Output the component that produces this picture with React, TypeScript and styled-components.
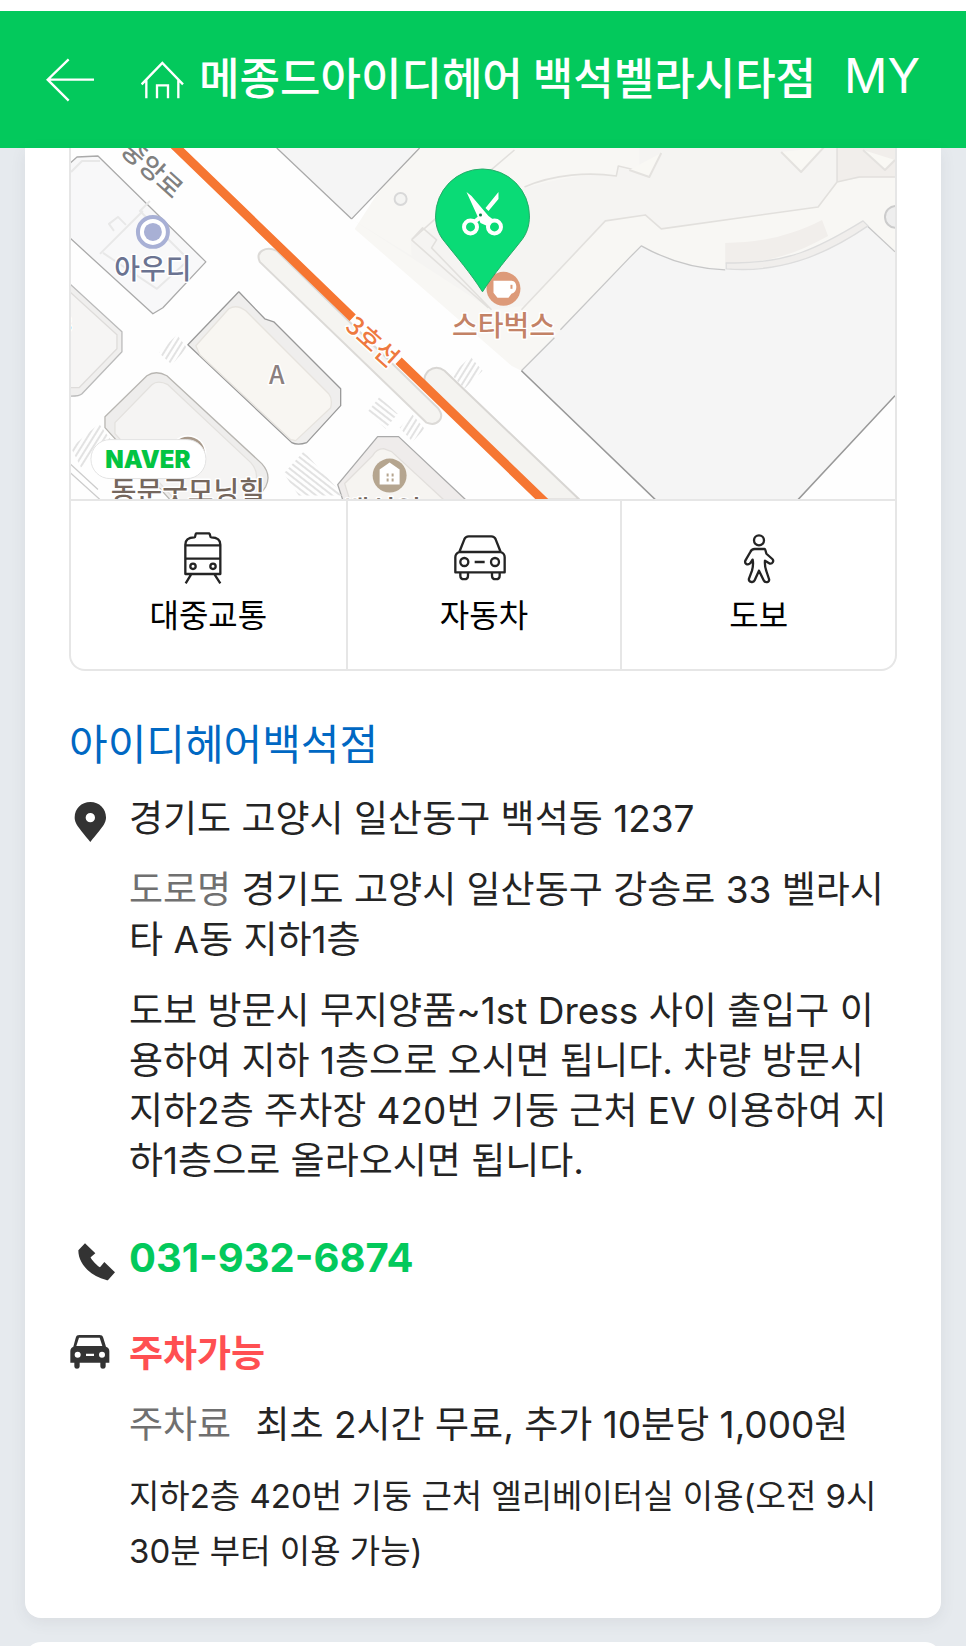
import React from "react";
import styled, { createGlobalStyle } from "styled-components";

const GlobalStyle = createGlobalStyle`
  * { box-sizing: border-box; }
  body {
    margin: 0;
    background: #e6eaee;
    color: #242424;
    font-family: Inter, "Noto Sans CJK KR", sans-serif;
  }
  h1, h2, p { margin: 0; font-weight: 400; }
  a { color: inherit; text-decoration: none; }
  svg { display: block; }
`;

const Page = styled.div`
  height: 100vh;
  overflow: hidden;
`;

const Header = styled.header`
  display: flex;
  align-items: center;
  height: 148px;
  padding: 0 46px;
  border-top: 11px solid #fff;
  background: #03c95c;
  color: #fff;
`;

const IconButton = styled.button<{ $gap: number }>`
  flex: none;
  padding: 0;
  border: 0;
  margin-right: ${(p) => p.$gap}px;
  background: none;
  color: inherit;
`;

const Title = styled.h1`
  flex: 1;
  padding-bottom: 8px;
  font-family: "Noto Sans CJK KR", sans-serif;
  font-size: 44px;
  font-weight: 500;
  line-height: 56px;
  white-space: nowrap;
`;

const MyLink = styled.a`
  padding-bottom: 8px;
  font-size: 48px;
  line-height: 56px;
`;

const Main = styled.main`
  padding: 0 25px;
`;

const Card = styled.section`
  padding: 0 44px 39px;
  border-radius: 0 0 16px 16px;
  background: #fff;
  box-shadow: 0 4px 16px rgba(60, 70, 80, 0.08);
`;

const NextCard = styled.section`
  height: 80px;
  margin-top: 24px;
  border-radius: 16px;
  background: #fff;
`;

const MapBox = styled.div`
  border: 2px solid #e6e6e6;
  border-top: 0;
  border-radius: 0 0 16px 16px;
  overflow: hidden;
`;

const MapDrawing = styled.svg`
  width: 100%;
  height: auto;
  font-family: "Noto Sans CJK KR", sans-serif;
  font-weight: 500;
`;

const Routes = styled.nav`
  display: grid;
  grid-template-columns: repeat(3, 1fr);
  border-top: 2px solid #e6e6e6;
`;

const Route = styled.a`
  display: flex;
  flex-direction: column;
  align-items: center;
  height: 168px;
  padding-top: 31px;
  gap: 8px;
  color: #000;
  font-size: 32px;
  line-height: 48px;

  & + & { border-left: 2px solid #e6e6e6; }
`;

const StoreName = styled.h2`
  margin: 48px 0 23px;
  color: #0068c3;
  font-size: 42px;
  line-height: 52px;
`;

const Row = styled.div<{ $space: number }>`
  display: grid;
  grid-template-columns: 60px 1fr;
  margin-top: ${(p) => p.$space}px;
`;

const RowIcon = styled.span<{ $top: number }>`
  padding-top: ${(p) => p.$top}px;
`;

const Text = styled.p`
  font-size: 37px;
  line-height: 50px;

  & + & { margin-top: 21px; }
`;

const SmallText = styled.p`
  margin-top: 19px;
  font-size: 33px;
  line-height: 55px;
`;

const Label = styled.span<{ $gap?: number }>`
  margin-right: ${(p) => p.$gap ?? 0}px;
  color: #707070;
`;

const PhoneLink = styled.a`
  color: #03c95c;
  font-size: 40px;
  font-weight: 700;
  line-height: 50px;
`;

const Parking = styled.strong`
  color: #ff4f52;
  font-weight: 700;
`;

function BackIcon() {
  return (
    <svg width="49" height="44" viewBox="0 0 147 132" fill="none" stroke="currentColor" strokeWidth="7">
      <path d="M144 65H5M68 4L5 65l63 63" />
    </svg>
  );
}

function HomeIcon() {
  return (
    <svg width="44" height="38" viewBox="2 0 132 114" fill="none" stroke="currentColor" strokeWidth="7">
      <path d="M4 70L66 6l62 64M18 56v56M114 56v56M50 112V73h33v39" />
    </svg>
  );
}

function TrainIcon() {
  return (
    <svg width="49" height="52" viewBox="13 0 147 156" fill="none" stroke="#242424" strokeWidth="7" strokeLinejoin="round">
      <path d="M17 126V38c0-14 9-22 27-22 5-1 1-9 6-12h38c6 3 1 11 7 12 18 0 27 8 27 22v88zM17 40h105M17 80h105M34 128L18 154M105 128l17 26" />
      <circle cx="40" cy="103" r="8" />
      <circle cx="100" cy="103" r="8" />
    </svg>
  );
}

function CarIcon() {
  return (
    <svg width="60" height="52" viewBox="5 0 180 156" fill="none" stroke="#242424" strokeWidth="7" strokeLinejoin="round">
      <path d="M9 121V76c0-9 4-13 12-16l15-38c3-7 6-9 13-9h68c7 0 10 2 13 9l15 38c9 3 12 7 12 16v45zM21 60h123M67 90h30" />
      <circle cx="36" cy="90" r="12" />
      <circle cx="128" cy="90" r="12" />
      <path d="M24 123v8c0 14 23 14 23 0v-8M119 123v8c0 14 23 14 23 0v-8" />
    </svg>
  );
}

function WalkIcon() {
  return (
    <svg width="32" height="52" viewBox="0 0 96 156" fill="none" stroke="#242424" strokeWidth="7" strokeLinejoin="round">
      <circle cx="48" cy="25" r="15" />
      <path d="M35 51h30c3 0 3 12 6 15l17 15c6 6 0 15-7 14l-15-9c-1 11 1 23 4 31l8 24c3 10-12 13-16 4l-14-29-13 29c-4 9-20 5-17-5l9-24c3-11 4-23 2-33-3 3-5 9-9 12-7 5-16 0-13-9L22 60c3-7 6-9 13-9z" />
    </svg>
  );
}

function PinIcon() {
  return (
    <svg width="37" height="40" viewBox="-18 0 111 120" fill="#333">
      <path fillRule="evenodd" d="M46 0c27 0 47 20 47 46 0 19-11 30-47 74C10 76-1 65-1 46-1 20 19 0 46 0zm0 33a14 14 0 100 28 14 14 0 000-28z" />
    </svg>
  );
}

function PhoneIcon() {
  return (
    <svg width="46" height="38" viewBox="-28 0 138 114" fill="#333">
      <path d="M20 1l31 30-14 12c-1 3 22 28 28 30l13-16 32 31-20 22c-1 2-3 2-6 1C35 98 0 63 0 22z" />
    </svg>
  );
}

function ParkingIcon() {
  return (
    <svg width="41" height="34" viewBox="-4 0 123 102" fill="#333">
      <path fillRule="evenodd" d="M27 0h60c7 0 10 2 12 9l8 26c7 3 10 7 10 14v34h-11v11c0 10-16 10-16 0V83H28v11c0 10-16 10-16 0V83H0V49c0-7 3-11 9-14l7-26c2-7 5-9 11-9zM26 8l-8 25h78l-8-25zM22 50a9 9 0 100 18 9 9 0 000-18zm73 0a9 9 0 100 18 9 9 0 000-18zM47 56v7h24v-7z" />
    </svg>
  );
}

function StoreMap() {
  return (
    <MapDrawing viewBox="71 148 825 351" role="img" aria-label="지도">
      <defs>
        <pattern id="crossing" width="5" height="5" patternUnits="userSpaceOnUse" patternTransform="rotate(-58)">
          <path d="M0 1h5" stroke="#e2e2e2" strokeWidth="2" />
        </pattern>
        <pattern id="crossing2" width="5" height="5" patternUnits="userSpaceOnUse" patternTransform="rotate(38)">
          <path d="M0 1h5" stroke="#e2e2e2" strokeWidth="2" />
        </pattern>
      </defs>
      <rect x="60" y="140" width="850" height="370" fill="#fefefe" />

      <g strokeWidth="1.3" strokeLinejoin="round">
        <path d="M407 148H896V252L522 371 512 366 355 229Z" fill="#f8f7f4" />
        <path d="M277 148H418L352 219Z" fill="#f5f5f5" />
        <path d="M277 148L352 219M352 219L420 148" fill="none" stroke="#aaa" />
        <path d="M352 219L412 256 411 238 520 190 C570 174 600 174 618 176L620 167 640 173 640 140H838V182L819 207 663 229 647 215 606 221 525 306 492 310Z" fill="#f5f4f2" />
        <path d="M838 148h58v29h-30l-28 5z" fill="#f1eeeb" />
        <path d="M412 240L480 180 515 150M412 240l77 68M412 240l11-12 14 12-5 8 60 62M525 187c30-13 65-15 92-11l2-10 21 5M522 310l84-89 40-6 16 14 157-22 19-25V148M838 182l22-5h36" fill="none" stroke="#e2e0dd" strokeWidth="1.6" />
        <path d="M630 170l20 7 12-24M782 152l20 20 23-25M864 150l22 20 10-10" fill="#f9f8f4" stroke="#e4e2df" strokeWidth="2" />
        <path d="M642 246L522 371 656 500H799L896 396V251L864 221C820 252 777 270 726 269 697 268 667 260 642 246Z" fill="#f5f5f5" />
        <path d="M630 258l12-12c25 14 55 23 84 24M864 222l32 30M630 258L561 330M522 371l33-33" fill="none" stroke="#c7c7c7" />
        <path d="M522 371L656 500M799 500L896 396" fill="none" stroke="#999" strokeWidth="1.6" />
        <path d="M726 243c35 0 65-7 97-23l6 16c-32 18-62 28-103 28z" fill="#f1eeeb" />
        <path d="M727 263c60 2 93-15 137-42l5 5c-48 33-92 47-142 43z" fill="#f0eeec" stroke="#ddd" />
        <circle cx="897" cy="217" r="11" fill="#eee" stroke="#ccc" strokeWidth="2" />
        <circle cx="401" cy="199" r="6" fill="#f4f4f2" stroke="#d8d8d8" strokeWidth="2" />

        <path d="M60 172L77 157 98 156 206 262 163 308 153 314 60 229Z" fill="#f8f8f9" stroke="#aaa" />
        <path d="M71 172l11-11h18M100 254l43-43M114 231l-5-7 9-7 8 8M103 253l54 36 32-29-49-49 10-10" fill="none" stroke="#e8e8e8" strokeWidth="2" />
        <path d="M60 275L122 332v20L82 394c-4 4-14 2-22 2Z" fill="#f0efee" stroke="#bbb" />
        <path d="M60 283l57 52v14l-38 39H60Z" fill="#f6f5f4" stroke="#dedcda" />
        <path d="M239 292L188 345 292 443q6 3 15 0L341 406V389L274 322 265 319Z" fill="#efeeed" stroke="#999" />
        <path d="M229 309q8-5 17 2l83 83q4 5 2 14l-35 33-5-1-91-85-4-9z" fill="#f8f6f2" stroke="#e6e3de" />
        <path d="M105 417L147 376q9-6 20 0L262 464q10 11 4 23L257 500H170L105 428Z" fill="#eeedec" stroke="#b8b6b2" />
        <path d="M115 423l37-38q6-5 16 0l83 78q9 10 4 22l-5 15h-75l-60-66z" fill="#f5f4f3" stroke="#e3e1de" />
        <path d="M60 464l40 36M60 455l38 35" fill="none" stroke="#ccc" />
        <path d="M260 262c-5-11 7-16 17-11l161 157c9 11-1 19-11 15z" fill="#f5f4f1" stroke="#dcdad7" strokeWidth="2" />
        <path d="M580 500L445 371q-8-6-16 0-5 5-4 11L543 500Z" fill="#f4f3f0" stroke="#d8d6d3" strokeWidth="2" />
        <path d="M378 437H399L466 500H343L338 485Z" fill="#efeceb" stroke="#aaa" />
        <path d="M384 449q-7 0-11 7l-28 28 5 16h94l-52-48z" fill="#f6f4f1" stroke="#e2dfdc" />
      </g>

      <path d="M159 353l18-18 10 13-15 17z" fill="url(#crossing)" />
      <path d="M71 448l28-24 12 16-30 28z" fill="url(#crossing)" />
      <path d="M284 474l20-22 40 44h-45z" fill="url(#crossing2)" />
      <path d="M368 412l12-15 18 17-12 15z" fill="url(#crossing2)" />
      <path d="M400 428l13-13 12 14-12 13zM452 375l19-18 12 14-18 18z" fill="url(#crossing)" />

      <path d="M171 142L353 318M399 361L547 504" stroke="#f67632" strokeWidth="9" fill="none" />

      <g textAnchor="middle" stroke="#fff" strokeWidth="3" paintOrder="stroke" strokeLinejoin="round">
        <text transform="translate(373 342) rotate(42)" y="9" fontSize="25" fill="#ee7940">3호선</text>
        <text transform="translate(152 169) rotate(42)" y="9" fontSize="26" fill="#808080">중앙로</text>
        <text x="153" y="279" fontSize="28" fill="#6b7391">아우디</text>
        <text x="277" y="384" fontSize="25" fill="#8b8080">A</text>
        <text x="66" y="332" fontSize="22" fill="#666">3</text>
        <text x="504" y="336" fontSize="28" fill="#c38266">스타벅스</text>
        <circle cx="188" cy="454" r="17" fill="#a8998a" />
        <text x="188" y="502" fontSize="28" fill="#75675d">동문굿모닝힐</text>
        <text x="383" y="521" fontSize="28" fill="#75675d">백석역</text>
      </g>

      <circle cx="153" cy="232" r="15" fill="#fff" stroke="#a8b0d5" strokeWidth="4" />
      <circle cx="153" cy="232" r="9" fill="#a8b0d5" />
      <circle cx="390" cy="476" r="17" fill="#b5a58f" />
      <path d="M380 485v-15l10-7 10 7v15z" fill="#fff" />
      <path d="M387 474h2v3h-2zm5 0h2v3h-2zm-5 5h2v3h-2zm5 0h2v3h-2z" fill="#b5a58f" />
      <circle cx="504" cy="289" r="17" fill="#dd9a79" />
      <path d="M494 281h18c6 0 7 11 0 13l-3 4h-11l-4-5z" fill="#fff" />
      <path d="M512 285v4" stroke="#dd9a79" strokeWidth="2" />

      <path d="M483 292C471 273 457 257 446 243 438 234 436 225 436 216a47 47 0 0194 0c0 9-2 18-10 27-11 14-25 30-37 49z" fill="#0adb76" stroke="#25aa67" />
      <g fill="#fff">
        <path d="M467 192l5 4 17 20 4 3-3 8-9-4-4-9zM499 192v7l-10 12-3-3z" />
        <g fill="none" stroke="#fff" strokeWidth="4">
          <circle cx="471" cy="227" r="6.5" />
          <circle cx="495" cy="227" r="6.5" />
          <path d="M481 217l-6 5" />
        </g>
        <circle cx="481" cy="215" r="1.5" fill="#087f47" />
      </g>

      <rect x="91" y="440" width="115" height="39" rx="19" fill="#fff" stroke="#e3e3e3" />
      <text x="148" y="468" textAnchor="middle" fontFamily="Inter, sans-serif" fontSize="24" fontWeight="900" fill="#03c442">NAVER</text>
    </MapDrawing>
  );
}

export default function App() {
  return (
    <Page>
      <GlobalStyle />
      <Header>
        <IconButton $gap={46} aria-label="뒤로"><BackIcon /></IconButton>
        <IconButton $gap={14} aria-label="홈"><HomeIcon /></IconButton>
        <Title>메종드아이디헤어 백석벨라시타점</Title>
        <MyLink href="#my">MY</MyLink>
      </Header>
      <Main>
        <Card>
          <MapBox>
            <StoreMap />
            <Routes>
              <Route href="#transit"><TrainIcon />대중교통</Route>
              <Route href="#car"><CarIcon />자동차</Route>
              <Route href="#walk"><WalkIcon />도보</Route>
            </Routes>
          </MapBox>
          <StoreName><a href="#store">아이디헤어백석점</a></StoreName>
          <Row $space={0}>
            <RowIcon $top={8}><PinIcon /></RowIcon>
            <div>
              <Text>경기도 고양시 일산동구 백석동 1237</Text>
              <Text><Label>도로명</Label> 경기도 고양시 일산동구 강송로 33 벨라시타 A동 지하1층</Text>
              <Text>도보 방문시 무지양품~1st Dress 사이 출입구 이용하여 지하 1층으로 오시면 됩니다. 차량 방문시 지하2층 주차장 420번 기둥 근처 EV 이용하여 지하1층으로 올라오시면 됩니다.</Text>
            </div>
          </Row>
          <Row $space={47}>
            <RowIcon $top={10}><PhoneIcon /></RowIcon>
            <PhoneLink href="tel:031-932-6874">031-932-6874</PhoneLink>
          </Row>
          <Row $space={46}>
            <RowIcon $top={6}><ParkingIcon /></RowIcon>
            <div>
              <Text><Parking>주차가능</Parking></Text>
              <Text><Label $gap={14}>주차료</Label> 최초 2시간 무료, 추가 10분당 1,000원</Text>
              <SmallText>지하2층 420번 기둥 근처 엘리베이터실 이용(오전 9시 30분 부터 이용 가능)</SmallText>
            </div>
          </Row>
        </Card>
        <NextCard />
      </Main>
    </Page>
  );
}
